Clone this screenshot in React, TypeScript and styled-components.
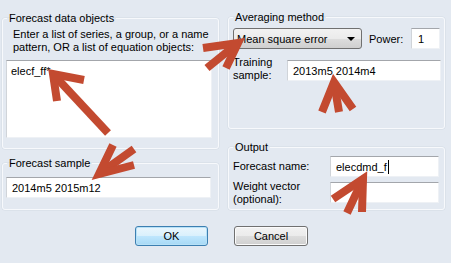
import React from "react";
import styled, { createGlobalStyle } from "styled-components";

const GlobalStyle = createGlobalStyle`
  html, body {
    margin: 0;
    padding: 0;
    background: #e3e9f1;
  }
  body {
    font-family: "Liberation Sans", Arial, sans-serif;
    font-size: 11px;
    color: #000;
  }
`;

const Dialog = styled.div`
  position: relative;
  box-sizing: border-box;
  width: 451px;
  height: 263px;
  padding: 10px 6px 0 2px;
  background: #e3e9f1;
  overflow: hidden;
`;

const Columns = styled.div`
  display: grid;
  grid-template-columns: 217px 217px;
  column-gap: 9px;
  align-items: start;
`;

const Column = styled.div`
  display: flex;
  flex-direction: column;
`;

const Group = styled.fieldset<{ $mt: number }>`
  margin: ${(p) => p.$mt}px 0 0 0;
  padding: 0;
  min-width: 0;
  border: 1px solid #f7f9fc;
  border-radius: 3px;
  box-shadow: 0 0 0 0.5px #d3dbe4;
`;

const Caption = styled.legend`
  margin-left: 4px;
  padding: 0 2px;
  font-size: 11px;
  line-height: 14px;
`;

const GroupBody = styled.div<{ $pad: string }>`
  padding: ${(p) => p.$pad};
`;

const Hint = styled.div`
  margin-left: 7px;
  line-height: 13px;
  white-space: nowrap;
`;

const Field = styled.div<{ $w: number; $h?: number; $ml?: number; $pl?: number }>`
  box-sizing: border-box;
  width: ${(p) => p.$w}px;
  height: ${(p) => p.$h ?? 21}px;
  margin-left: ${(p) => p.$ml ?? 0}px;
  padding-left: ${(p) => p.$pl ?? 5}px;
  background: #fff;
  border-top: 1px solid #a3a6ab;
  border-left: 1px solid #d0d4d9;
  border-right: 1px solid #eef1f5;
  border-bottom: 1px solid #eef1f5;
  display: flex;
  align-items: center;
  white-space: nowrap;
  flex: none;
`;

const AreaField = styled(Field)`
  margin-top: 6px;
  align-items: flex-start;
  padding-top: 3px;
  line-height: 14px;
`;

const Caret = styled.span`
  display: inline-block;
  width: 1px;
  height: 14px;
  background: #000;
  margin-left: 1px;
`;

const Row = styled.div<{ $mt?: number; $ml?: number }>`
  display: flex;
  align-items: center;
  height: 21px;
  margin-top: ${(p) => p.$mt ?? 0}px;
  margin-left: ${(p) => p.$ml ?? 0}px;
`;

const Label = styled.div<{ $w: number; $shift?: number }>`
  width: ${(p) => p.$w}px;
  flex: none;
  line-height: 13px;
  margin-top: ${(p) => p.$shift ?? 0}px;
  white-space: nowrap;
`;

const Combo = styled.div`
  box-sizing: border-box;
  width: 129px;
  height: 21px;
  padding: 0 6px 0 3px;
  border: 1px solid #707070;
  border-radius: 3px;
  background: linear-gradient(#f2f2f2 0%, #ebebeb 50%, #dddddd 51%, #cfcfcf 100%);
  display: flex;
  align-items: center;
  justify-content: space-between;
  flex: none;
`;

const DropArrow = styled.span`
  width: 0;
  height: 0;
  border-left: 4px solid transparent;
  border-right: 4px solid transparent;
  border-top: 4px solid #000;
`;

const PowerLabel = styled.span`
  margin-left: 7px;
  width: 42px;
  flex: none;
`;

const Buttons = styled.div`
  display: flex;
  gap: 26px;
  margin-top: 16px;
  padding-left: 133px;
`;

const Button = styled.div<{ $w: number; $default?: boolean }>`
  box-sizing: border-box;
  width: ${(p) => p.$w}px;
  height: 20px;
  border: 1px solid ${(p) => (p.$default ? "#3c7fb1" : "#707070")};
  border-radius: 3px;
  background: ${(p) =>
    p.$default
      ? "linear-gradient(#eaf6fd 0%, #d9f0fc 50%, #bee6fd 51%, #a7d9f5 100%)"
      : "linear-gradient(#f2f2f2 0%, #ebebeb 50%, #dddddd 51%, #cfcfcf 100%)"};
  box-shadow: ${(p) => (p.$default ? "inset 0 0 0 1px #b7e1f7" : "inset 0 0 0 1px #fbfbfb")};
  display: flex;
  align-items: center;
  justify-content: center;
`;

const Overlay = styled.svg`
  position: absolute;
  left: 0;
  top: 0;
  pointer-events: none;
`;

const arrows: { head: string; shaft: string }[] = [
  { head: "M57,101 L53,74 L84,80", shaft: "M53,74 L108,133" },
  { head: "M113,145 L99,174 L134,165", shaft: "M99,174 L134,149" },
  { head: "M203,48 L238,43 L226,68", shaft: "M238,43 L207,68" },
  { head: "M322,112 L334,82 L353,109", shaft: "M334,82 L339,112" },
  { head: "M333,199 L363,179 L362,212", shaft: "M363,179 L347,213" },
];

export default function App() {
  return (
    <>
      <GlobalStyle />
      <Dialog>
        <Columns>
          <Column>
            <Group $mt={1}>
              <Caption>Forecast data objects</Caption>
              <GroupBody $pad="3px 6px 10px 3px">
                <Hint>
                  Enter a list of series, a group, or a name
                  <br />
                  pattern, OR a list of equation objects:
                </Hint>
                <AreaField $w={206} $h={78} $pl={4}>
                  elecf_ff*
                </AreaField>
              </GroupBody>
            </Group>
            <Group $mt={7}>
              <Caption>Forecast sample</Caption>
              <GroupBody $pad="7px 7px 11px 3px">
                <Field $w={205}>2014m5 2015m12</Field>
              </GroupBody>
            </Group>
          </Column>
          <Column>
            <Group $mt={0}>
              <Caption>Averaging method</Caption>
              <GroupBody $pad="4px 4px 47px 4px">
                <Row>
                  <Combo>
                    <span>Mean square error</span>
                    <DropArrow />
                  </Combo>
                  <PowerLabel>Power:</PowerLabel>
                  <Field $w={29} $pl={6}>1</Field>
                </Row>
                <Row $mt={11}>
                  <Label $w={54} $shift={-3}>
                    Training
                    <br />
                    sample:
                  </Label>
                  <Field $w={154}>2013m5 2014m4</Field>
                </Row>
              </GroupBody>
            </Group>
            <Group $mt={11}>
              <Caption>Output</Caption>
              <GroupBody $pad="2px 4px 6px 4px">
                <Row>
                  <Label $w={97}>Forecast name:</Label>
                  <Field $w={109}>
                    elecdmd_f
                    <Caret />
                  </Field>
                </Row>
                <Row $mt={5}>
                  <Label $w={97}>
                    Weight vector
                    <br />
                    (optional):
                  </Label>
                  <Field $w={109} />
                </Row>
              </GroupBody>
            </Group>
          </Column>
        </Columns>
        <Buttons>
          <Button $w={73} $default>
            OK
          </Button>
          <Button $w={74}>Cancel</Button>
        </Buttons>
        <Overlay width={451} height={263} viewBox="0 0 451 263">
          {arrows.map((a, i) => (
            <g key={i} fill="none" stroke="#c34a30" strokeWidth={8} strokeLinejoin="miter">
              <path d={a.shaft} />
              <path d={a.head} />
            </g>
          ))}
        </Overlay>
      </Dialog>
    </>
  );
}
